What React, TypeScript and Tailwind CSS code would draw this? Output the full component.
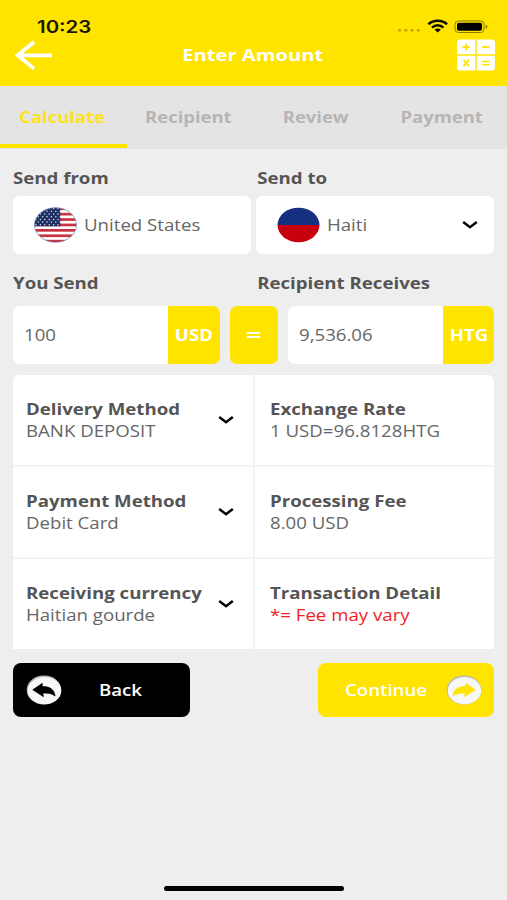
import type { ReactNode } from "react";
import clsx from "clsx";

interface Detail {
  title: string;
  value: string;
  select?: boolean;
  warn?: boolean;
}

const tabs = ["Calculate", "Recipient", "Review", "Payment"];

const details: Detail[] = [
  { title: "Delivery Method", value: "BANK DEPOSIT", select: true },
  { title: "Exchange Rate", value: "1 USD=96.8128HTG" },
  { title: "Payment Method", value: "Debit Card", select: true },
  { title: "Processing Fee", value: "8.00 USD" },
  { title: "Receiving currency", value: "Haitian gourde", select: true },
  { title: "Transaction Detail", value: "*= Fee may vary", warn: true },
];

// Wide lettering, stretched from its left edge unless told otherwise
function Wide({ children, className }: { children: ReactNode; className?: string }) {
  return <span className={clsx("inline-block whitespace-nowrap", className ?? "origin-left scale-x-[1.203]")}>{children}</span>;
}

function Chevron() {
  return (
    <svg width="16" height="10" viewBox="0 0 16 10" fill="none" stroke="#000" strokeWidth="2.5">
      <path d="M1.2 2 L8 7.2 L14.8 2" />
    </svg>
  );
}

function UsFlag() {
  return (
    <svg width="43" height="36" viewBox="0 0 43 36">
      <defs>
        <clipPath id="us"><ellipse cx="21.5" cy="18" rx="21" ry="17.3" /></clipPath>
      </defs>
      <g clipPath="url(#us)">
        <rect width="43" height="36" fill="#fff" />
        {[0, 1, 2, 3, 4, 5, 6].map((i) => (
          <rect key={i} y={0.4 + i * 5.4} width="43" height="2.7" fill="#c9323f" />
        ))}
        <rect width="26.3" height="19.2" fill="#1f2f63" />
        {[0, 1, 2, 3, 4, 5, 6].map((r) =>
          [0, 1, 2, 3, 4, 5].map((c) => (
            <circle key={`${r}-${c}`} cx={2 + c * 4.4 + (r % 2) * 2.2} cy={1.6 + r * 2.7} r="0.75" fill="#dfe5f2" />
          ))
        )}
      </g>
      <ellipse cx="21.5" cy="18" rx="21" ry="17.3" fill="none" stroke="#7486bd" strokeWidth="0.7" />
    </svg>
  );
}

function HaitiFlag() {
  return (
    <svg width="43" height="36" viewBox="0 0 43 36">
      <defs>
        <clipPath id="ht"><ellipse cx="21.5" cy="18" rx="21" ry="17.2" /></clipPath>
      </defs>
      <g clipPath="url(#ht)">
        <rect width="43" height="18" fill="#14307e" />
        <rect y="18" width="43" height="18" fill="#c7000f" />
      </g>
    </svg>
  );
}

function ArrowBadge({ color, flip }: { color: string; flip?: boolean }) {
  return (
    <svg width="36" height="30" viewBox="0 0 36 30">
      <ellipse cx="18" cy="15" rx="17.3" ry="14.4" fill="#b9b9b9" />
      <ellipse cx="18.5" cy="15.7" rx="16.7" ry="13.6" fill="#f7f7f7" />
      <path
        d="M6.8 14.8 L16.2 8.4 V11.6 C23.5 11.4 28.4 14.4 29 21 C25.5 18.2 21.5 17.7 16.6 18.2 L17.4 21.6 Z"
        fill={color}
        stroke={color}
        strokeWidth="0.8"
        strokeLinejoin="round"
        transform={flip ? "translate(36 0) scale(-1 1)" : undefined}
      />
    </svg>
  );
}

function StatusIcons() {
  return (
    <svg width="92" height="16" viewBox="0 0 92 16">
      {[0, 1, 2, 3].map((i) => (
        <rect key={i} x={0.8 + i * 6.3} y="11" width="3.4" height="2.6" rx="1.2" fill="#c3a900" />
      ))}
      <g fill="none" stroke="#0d0c00" strokeWidth="2.6">
        <path d="M31.4 6.2 C36.7 1.6 44.7 1.6 50 6.2" />
        <path d="M35 9.6 C38.4 6.6 43 6.6 46.4 9.6" />
      </g>
      <path d="M37.5 11.5 C39.4 10.1 42 10.1 43.9 11.5 L40.7 14.4 Z" fill="#0d0c00" />
      <rect x="58" y="2.9" width="29" height="11.6" rx="3.4" fill="none" stroke="#8b7c00" strokeWidth="1" />
      <rect x="60" y="4.7" width="25" height="8" rx="1.8" fill="#000" />
      <path d="M88.6 6.8 C91 7.4 91 10.2 88.6 10.8 Z" fill="#8b7c00" />
    </svg>
  );
}

function CalculatorIcon() {
  return (
    <svg width="38" height="32" viewBox="0 0 38 32">
      <rect y="0.5" width="38" height="31" rx="3" fill="#fff" />
      <path d="M19 0 V32 M0 16 H38" stroke="#ffe400" strokeWidth="1.4" />
      <g stroke="#ffe400" strokeWidth="1.9">
        <path d="M5.4 8 H12.8 M9.1 4.8 V11.2" />
        <path d="M25.2 8 H32.6" />
        <path d="M6.4 20.8 L12 27.2 M12 20.8 L6.4 27.2" />
        <path d="M25.2 22.5 H32.6 M25.2 25.7 H32.6" strokeWidth="1.5" />
      </g>
    </svg>
  );
}

function AmountField({ amount, currency }: { amount: string; currency: string }) {
  return (
    <div className="flex h-[58px] w-[206.5px] overflow-hidden rounded-[7px] bg-white">
      <div className="flex flex-1 items-center pl-[11px]"><Wide>{amount}</Wide></div>
      <div className="flex w-[51.5px] items-center justify-center bg-[#ffe400] font-bold text-white"><Wide className="origin-center scale-x-[1.2]">{currency}</Wide></div>
    </div>
  );
}

export default function App() {
  return (
    <div className="flex h-[900px] w-[507px] flex-col overflow-hidden bg-[#eeeeee] font-['Open_Sans',sans-serif] text-[15.5px] leading-[22px] text-[#666666]">
      {/* Header */}
      <header className="h-[86px] bg-[#ffe400] text-white">
        <div className="flex h-[39px] items-end justify-between pl-[36.5px] pr-[18px]">
          <span className="inline-block origin-left scale-x-[1.2] pb-[1px] font-['Inter',sans-serif] text-[17px] font-semibold text-[#1a1700]">10:23</span>
          <div className="pb-[5px]"><StatusIcons /></div>
        </div>
        <div className="flex h-8 items-center justify-between pl-[14.5px] pr-[12px]">
          <svg width="38" height="30" viewBox="0 0 38 30" fill="none" stroke="#fff" strokeWidth="3.7">
            <path d="M37 15.3 H3 M19 2 L2.6 15.3 L19 28.6" />
          </svg>
          <Wide className="origin-center scale-x-[1.3] pr-[3.5px] font-bold">Enter Amount</Wide>
          <CalculatorIcon />
        </div>
      </header>

      {/* Steps */}
      <nav className="h-[63px] bg-[#e4e4e4] font-bold text-[#b5b5b5]">
        <div className="grid w-[506px] grid-cols-4">
          {tabs.map((tab, i) => (
            <div key={tab} className={clsx("flex h-[62px] items-center justify-center border-b-4 pr-[2px] pt-[4px]", i === 0 ? "border-[#ffe400] text-[#ffe11c]" : "border-transparent")}>
              <Wide className="origin-center scale-x-[1.19]">{tab}</Wide>
            </div>
          ))}
        </div>
      </nav>

      <main className="flex flex-1 flex-col pl-[13.4px] pr-[12.6px]">
        {/* Countries */}
        <div className="mt-[18px] grid grid-cols-2 gap-x-[5px] font-bold text-[#555555]">
          <Wide>Send from</Wide>
          <Wide className="origin-left scale-x-[1.203] pl-[1px]">Send to</Wide>
        </div>
        <div className="mt-[7px] grid grid-cols-2 gap-x-[5px]">
          <div className="flex h-[58px] items-center rounded-[6px] bg-white pl-[20.3px]">
            <UsFlag />
            <div className="ml-[7px]"><Wide>United States</Wide></div>
          </div>
          <div className="flex h-[58px] items-center rounded-[6px] bg-white pl-[20.3px] pr-4">
            <HaitiFlag />
            <div className="ml-[7px] flex-1"><Wide>Haiti</Wide></div>
            <Chevron />
          </div>
        </div>

        {/* Amounts */}
        <div className="mt-[18px] grid grid-cols-2 gap-x-[5px] font-bold text-[#555555]">
          <Wide>You Send</Wide>
          <Wide className="origin-left scale-x-[1.203] pl-[1px]">Recipient Receives</Wide>
        </div>
        <div className="mt-3 flex justify-between">
          <AmountField amount="100" currency="USD" />
          <div className="flex h-[58px] w-[47.5px] items-center justify-center rounded-[7px] bg-[#ffe400] text-white">
            <Wide className="origin-center scale-x-[1.35] text-[20px] font-bold">=</Wide>
          </div>
          <AmountField amount="9,536.06" currency="HTG" />
        </div>

        {/* Details */}
        <div className="mt-[11px] grid grid-cols-2 gap-[2px] overflow-hidden rounded-t-[6px] bg-[#f3f3f3]">
          {details.map((d) => (
            <div key={d.title} className={clsx("flex h-[90px] items-center bg-white pr-[18.5px]", d.select ? "pl-[13px]" : "pl-[15.3px]")}>
              <div className="flex flex-1 flex-col items-start">
                <Wide className="origin-left scale-x-[1.203] font-bold text-[#555555]">{d.title}</Wide>
                <Wide className={clsx("origin-left scale-x-[1.203]", d.warn && "text-[#f01e1e]")}>{d.value}</Wide>
              </div>
              {d.select && <Chevron />}
            </div>
          ))}
        </div>

        {/* Actions */}
        <div className="mt-[14px] flex justify-between font-semibold text-white">
          <button className="flex h-[54px] w-[176.5px] items-center rounded-[8px] bg-black pl-[12.5px]">
            <ArrowBadge color="#000" />
            <div className="ml-[37px]"><Wide>Back</Wide></div>
          </button>
          <button className="flex h-[54px] w-[176.5px] items-center justify-between rounded-[8px] bg-[#ffe400] pl-[27.5px] pr-[12.5px]">
            <Wide>Continue</Wide>
            <ArrowBadge color="#ffe400" flip />
          </button>
        </div>

        {/* Home indicator */}
        <div className="mb-[9px] ml-[150.6px] mt-auto h-[5.5px] w-[180px] rounded-full bg-black" />
      </main>
    </div>
  );
}
